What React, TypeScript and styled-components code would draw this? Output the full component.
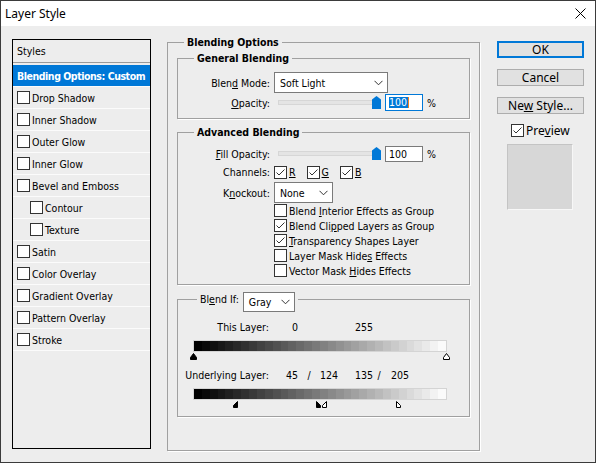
import React from "react";
import styled, { createGlobalStyle } from "styled-components";

const GlobalStyle = createGlobalStyle`
  html, body {
    margin: 0;
    padding: 0;
    background: #ededed;
  }
  body {
    font-family: "DejaVu Sans Condensed", "Liberation Sans", Arial, sans-serif;
    font-size: 10.5px;
    color: #000;
  }
`;

// stepped grey ramp, like the banded Blend If bars
const rampStops = Array.from({ length: 32 }, (_, i) => {
  const v = Math.round((i / 31) * 250);
  const c = `rgb(${v},${v},${v})`;
  return `${c} ${(i / 32) * 100}%, ${c} ${((i + 1) / 32) * 100}%`;
}).join(", ");

const Window = styled.div`
  width: 596px;
  height: 463px;
  box-sizing: border-box;
  border: 1px solid #3b3b3b;
  background: #ededed;
  display: flex;
  flex-direction: column;
  overflow: hidden;
`;

const TitleBar = styled.div`
  height: 25px;
  background: #fff;
  display: flex;
  align-items: center;
  justify-content: space-between;
  padding-left: 4px;
  font-family: "Noto Sans", "Segoe UI", sans-serif;
  font-size: 12px;
`;

const CloseButton = styled.div`
  width: 30px;
  height: 25px;
  display: flex;
  align-items: center;
  justify-content: center;
`;

const Body = styled.div`
  display: flex;
  align-items: flex-start;
  padding: 9px 0 0 11px;
`;

const StylesPanel = styled.div`
  width: 139px;
  height: 410px;
  box-sizing: border-box;
  margin-top: 4px;
  border: 1px solid #000;
  display: flex;
  flex-direction: column;
`;

const PanelHeader = styled.div`
  height: 22px;
  display: flex;
  align-items: center;
  padding-left: 4px;
  border-bottom: 1px solid #9a9a9a;
  margin-bottom: 2px;
`;

const StyleRow = styled.div<{ $indent?: boolean; $active?: boolean }>`
  height: 21px;
  display: flex;
  align-items: center;
  border-bottom: 1px solid #fbfbfb;
  padding-left: ${(p) => (p.$active ? 4 : p.$indent ? 17 : 4)}px;
  background: ${(p) => (p.$active ? "#0078d7" : "transparent")};
  color: ${(p) => (p.$active ? "#fff" : "#000")};
  font-weight: ${(p) => (p.$active ? "bold" : "normal")};
  letter-spacing: ${(p) => (p.$active ? "-0.45px" : "0")};
  white-space: nowrap;
  overflow: hidden;
`;

const Box = styled.span`
  width: 13px;
  height: 13px;
  box-sizing: border-box;
  border: 1px solid #333;
  background: #fff;
  display: inline-flex;
  align-items: center;
  justify-content: center;
  flex: none;
  margin-right: 2px;
`;

const CheckLabel = styled.span<{ $big?: boolean }>`
  display: inline-flex;
  align-items: center;
  white-space: nowrap;
  font-family: ${(p) =>
    p.$big ? `"Noto Sans", "Segoe UI", sans-serif` : "inherit"};
  font-size: ${(p) => (p.$big ? "12px" : "inherit")};
`;

const Middle = styled.fieldset`
  margin: 0 0 0 16px;
  padding: 0 9px;
  width: 313px;
  height: 416px;
  box-sizing: border-box;
  border: 1px solid #a0a0a0;
  box-shadow: 1px 1px 0 #fff;
  min-width: 0;
`;

const Legend = styled.legend<{ $ml?: number }>`
  margin-left: ${(p) => p.$ml ?? 16}px;
  padding: 0 3px;
  font-weight: bold;
  line-height: 14px;
  background: #ededed;
`;

const Group = styled.fieldset<{ $mt: number; $pt: number; $pb: number }>`
  margin: ${(p) => p.$mt}px 0 0;
  padding: ${(p) => p.$pt}px 0 ${(p) => p.$pb}px;
  border: 1px solid #a0a0a0;
  box-shadow: 1px 1px 0 #fff;
  min-width: 0;
  display: flex;
  flex-direction: column;
`;

// legend is one text line tall; the dropdown hangs below it like the original
const BlendIfLegend = styled.legend`
  margin-left: 19px;
  padding: 0 3px;
  height: 14px;
  line-height: 14px;
  display: flex;
  align-items: flex-start;
  gap: 4px;
  background: #ededed;
`;

const Row = styled.div<{ $h: number; $mt?: number }>`
  height: ${(p) => p.$h}px;
  margin-top: ${(p) => p.$mt ?? 0}px;
  display: flex;
  align-items: center;
`;

const Label = styled.span`
  width: 92px;
  margin-right: 4px;
  text-align: right;
  white-space: nowrap;
  flex: none;
`;

const Indent = styled.span`
  width: 96px;
  flex: none;
`;

const Dropdown = styled.div<{ $w: number; $h: number }>`
  width: ${(p) => p.$w}px;
  height: ${(p) => p.$h}px;
  box-sizing: border-box;
  flex: none;
  border: 1px solid #7a7a7a;
  background: #fff;
  display: flex;
  align-items: center;
  justify-content: space-between;
  padding: 0 4px 0 5px;
`;

const Slider = styled.div`
  position: relative;
  width: 107px;
  height: 17px;
  display: flex;
  align-items: center;
  flex: none;
`;

const Track = styled.div`
  margin: 0 4px;
  flex: 1;
  height: 3px;
  background: #e4e4e4;
  border: 1px solid #d6d6d6;
`;

const Thumb = styled.svg`
  position: absolute;
  right: 0;
  top: 2px;
`;

const NumberBox = styled.div<{ $focus?: boolean; $h: number }>`
  width: 38px;
  height: ${(p) => p.$h}px;
  box-sizing: border-box;
  margin-left: 4px;
  border: 1px solid ${(p) => (p.$focus ? "#0078d7" : "#7a7a7a")};
  background: #fff;
  display: flex;
  align-items: center;
  padding-left: 3px;
`;

const Selected = styled.span`
  background: #0078d7;
  color: #fff;
  line-height: 11px;
  padding: 0 1px 0 0;
  border-right: 1px solid #f08020;
`;

const Percent = styled.span`
  margin-left: 4px;
`;

const Channels = styled.div`
  display: flex;
  gap: 11px;
`;

const ValueGrid = styled.div<{ $mt?: number }>`
  display: grid;
  grid-template-columns: 91px 29px 22px 35px 18px 12px 1fr;
  height: 14px;
  margin-top: ${(p) => p.$mt ?? 0}px;
  align-items: center;
  white-space: nowrap;
`;

const ValRight = styled.span`
  text-align: right;
`;

const ValCenter = styled.span`
  text-align: center;
`;

const ValLeft = styled.span<{ $pl?: number }>`
  padding-left: ${(p) => p.$pl ?? 0}px;
`;

const Ramp = styled.div`
  margin: 6px 0 0 15px;
  width: 254px;
  height: 12px;
  box-sizing: border-box;
  border: 1px solid #d4d4d4;
  background: linear-gradient(to right, ${rampStops});
`;

const MarkerTrack = styled.div`
  position: relative;
  margin-left: 15px;
  width: 254px;
  height: 8px;
`;

const Marker = styled.svg`
  position: absolute;
  top: 1px;
`;

const RightCol = styled.div`
  margin: 6px 0 0 17px;
  width: 87px;
  display: flex;
  flex-direction: column;
`;

const Button = styled.div<{ $default?: boolean }>`
  height: 17px;
  box-sizing: border-box;
  margin-bottom: 11px;
  border: ${(p) => (p.$default ? "2px solid #0078d7" : "1px solid #adadad")};
  background: #e1e1e1;
  display: flex;
  align-items: center;
  justify-content: center;
  white-space: pre;
  font-family: "Noto Sans", "Segoe UI", sans-serif;
  font-size: 12px;
  line-height: 1;
`;

const PreviewRow = styled.div`
  margin: -1px 0 0 14px;
  height: 13px;
  display: flex;
  align-items: center;
`;

const Swatch = styled.div`
  margin: 7px 0 0 10px;
  width: 66px;
  height: 66px;
  box-sizing: border-box;
  background: #d7d7d7;
  border: 1px solid #f7f7f7;
  border-top-color: #c4c4c4;
  border-left-color: #c4c4c4;
`;

const Check = () => (
  <svg width="11" height="11" viewBox="0 0 11 11">
    <path d="M1.5 5.5 L4 8 L9.5 2.5" fill="none" stroke="#333" strokeWidth="1" />
  </svg>
);

const CheckBox = ({
  checked,
  children,
  big,
}: {
  checked?: boolean;
  children?: React.ReactNode;
  big?: boolean;
}) => (
  <CheckLabel $big={big}>
    <Box>{checked && <Check />}</Box>
    <span>{children}</span>
  </CheckLabel>
);

const Chevron = () => (
  <svg width="9" height="6" viewBox="0 0 9 6">
    <path d="M0.5 0.8 L4.5 4.8 L8.5 0.8" fill="none" stroke="#333" strokeWidth="1" />
  </svg>
);

const BlueThumb = () => (
  <Thumb width="9" height="13" viewBox="0 0 9 13">
    <path d="M0 3.5 L4.5 0 L9 3.5 L9 13 L0 13 Z" fill="#0078d7" />
  </Thumb>
);

type MarkKind =
  | "full-black"
  | "full-white"
  | "left-black"
  | "right-black"
  | "left-white"
  | "right-white";

const markPath: Record<string, string> = {
  full: "M0.5 6.5 L0.5 4.5 L3.5 0.5 L6.5 4.5 L6.5 6.5 Z",
  left: "M0.5 6.5 L0.5 4.5 L4.5 0.5 L4.5 6.5 Z",
  right: "M0.5 6.5 L0.5 0.5 L4.5 4.5 L4.5 6.5 Z",
};

const RampMarker = ({ value, kind }: { value: number; kind: MarkKind }) => {
  const [shape, tone] = kind.split("-");
  const x = (value / 255) * 253;
  const w = shape === "full" ? 7 : 5;
  const left = shape === "full" ? x - 3.5 : shape === "left" ? x - 4.5 : x;
  return (
    <Marker width={w} height="7" viewBox={`0 0 ${w} 7`} style={{ left }}>
      <path
        d={markPath[shape]}
        fill={tone === "black" ? "#000" : "#fff"}
        stroke="#000"
        strokeWidth="1"
      />
    </Marker>
  );
};

const styleItems: { name: string; indent?: boolean }[] = [
  { name: "Drop Shadow" },
  { name: "Inner Shadow" },
  { name: "Outer Glow" },
  { name: "Inner Glow" },
  { name: "Bevel and Emboss" },
  { name: "Contour", indent: true },
  { name: "Texture", indent: true },
  { name: "Satin" },
  { name: "Color Overlay" },
  { name: "Gradient Overlay" },
  { name: "Pattern Overlay" },
  { name: "Stroke" },
];

export default function App() {
  return (
    <>
      <GlobalStyle />
      <Window>
        <TitleBar>
          <span>Layer Style</span>
          <CloseButton>
            <svg width="11" height="11" viewBox="0 0 11 11">
              <path
                d="M0.5 0.5 L10.5 10.5 M10.5 0.5 L0.5 10.5"
                stroke="#000"
                strokeWidth="1"
              />
            </svg>
          </CloseButton>
        </TitleBar>
        <Body>
          <StylesPanel>
            <PanelHeader>Styles</PanelHeader>
            <StyleRow $active>Blending Options: Custom</StyleRow>
            {styleItems.map((s) => (
              <StyleRow key={s.name} $indent={s.indent}>
                <CheckBox>{s.name}</CheckBox>
              </StyleRow>
            ))}
          </StylesPanel>

          <Middle>
            <Legend $ml={7}>Blending Options</Legend>
            <Group $mt={2} $pt={7} $pb={7}>
              <Legend>General Blending</Legend>
              <Row $h={21}>
                <Label>
                  Blen<u>d</u> Mode:
                </Label>
                <Dropdown $w={114} $h={21}>
                  Soft Light
                  <Chevron />
                </Dropdown>
              </Row>
              <Row $h={17} $mt={1}>
                <Label>
                  <u>O</u>pacity:
                </Label>
                <Slider>
                  <Track />
                  <BlueThumb />
                </Slider>
                <NumberBox $focus $h={17}>
                  <Selected>100</Selected>
                </NumberBox>
                <Percent>%</Percent>
              </Row>
            </Group>

            <Group $mt={6} $pt={6} $pb={6}>
              <Legend>Advanced Blending</Legend>
              <Row $h={17}>
                <Label>
                  <u>F</u>ill Opacity:
                </Label>
                <Slider>
                  <Track />
                  <BlueThumb />
                </Slider>
                <NumberBox $h={16}>100</NumberBox>
                <Percent>%</Percent>
              </Row>
              <Row $h={14} $mt={3}>
                <Label>Channels:</Label>
                <Channels>
                  <CheckBox checked>
                    <u>R</u>
                  </CheckBox>
                  <CheckBox checked>
                    <u>G</u>
                  </CheckBox>
                  <CheckBox checked>
                    <u>B</u>
                  </CheckBox>
                </Channels>
              </Row>
              <Row $h={21} $mt={3}>
                <Label>
                  K<u>n</u>ockout:
                </Label>
                <Dropdown $w={59} $h={21}>
                  None
                  <Chevron />
                </Dropdown>
              </Row>
              <Row $h={15}>
                <Indent />
                <CheckBox>
                  Blend <u>I</u>nterior Effects as Group
                </CheckBox>
              </Row>
              <Row $h={15}>
                <Indent />
                <CheckBox checked>
                  Blend Cli<u>p</u>ped Layers as Group
                </CheckBox>
              </Row>
              <Row $h={15}>
                <Indent />
                <CheckBox checked>
                  <u>T</u>ransparency Shapes Layer
                </CheckBox>
              </Row>
              <Row $h={15}>
                <Indent />
                <CheckBox>
                  Layer Mask Hide<u>s</u> Effects
                </CheckBox>
              </Row>
              <Row $h={15}>
                <Indent />
                <CheckBox>
                  Vector Mask <u>H</u>ides Effects
                </CheckBox>
              </Row>
            </Group>

            <Group $mt={7} $pt={14} $pb={8}>
              <BlendIfLegend>
                <span>
                  Bl<u>e</u>nd If:
                </span>
                <Dropdown $w={52} $h={20}>
                  Gray
                  <Chevron />
                </Dropdown>
              </BlendIfLegend>
              <ValueGrid>
                <ValRight>This Layer:</ValRight>
                <ValRight>0</ValRight>
                <span />
                <span />
                <ValLeft>255</ValLeft>
              </ValueGrid>
              <Ramp />
              <MarkerTrack>
                <RampMarker value={0} kind="full-black" />
                <RampMarker value={255} kind="full-white" />
              </MarkerTrack>
              <ValueGrid $mt={8}>
                <ValRight>Underlying Layer:</ValRight>
                <ValRight>45</ValRight>
                <ValCenter>/</ValCenter>
                <ValLeft>124</ValLeft>
                <ValLeft>135</ValLeft>
                <ValCenter>/</ValCenter>
                <ValLeft $pl={6}>205</ValLeft>
              </ValueGrid>
              <Ramp />
              <MarkerTrack>
                <RampMarker value={45} kind="left-black" />
                <RampMarker value={124} kind="right-black" />
                <RampMarker value={135} kind="left-white" />
                <RampMarker value={205} kind="right-white" />
              </MarkerTrack>
            </Group>
          </Middle>

          <RightCol>
            <Button $default>OK</Button>
            <Button>Cancel</Button>
            <Button>
              <span>
                Ne<u>w</u> Style...
              </span>
            </Button>
            <PreviewRow>
              <CheckBox checked big>
                Pre<u>v</u>iew
              </CheckBox>
            </PreviewRow>
            <Swatch />
          </RightCol>
        </Body>
      </Window>
    </>
  );
}
